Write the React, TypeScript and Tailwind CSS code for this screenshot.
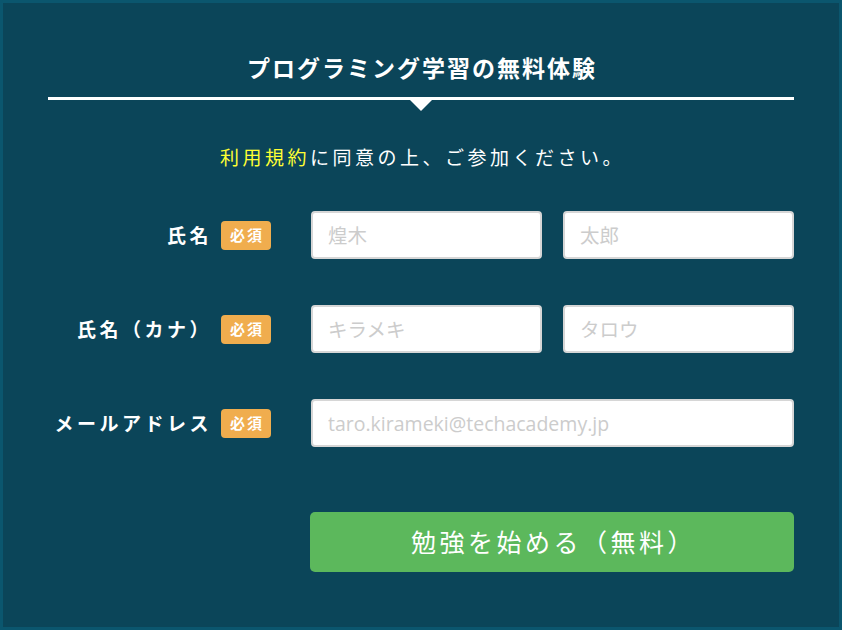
import React from 'react';

const font = { fontFamily: '"Noto Sans CJK JP", "Noto Sans", sans-serif' };
const inputFont = { fontFamily: '"Open Sans", "Noto Sans CJK JP", sans-serif' };

function Badge() {
  return (
    <span className="inline-flex h-[29px] w-[50px] items-center justify-center rounded-[4px] bg-[#f0ad4e] pl-[2px] text-[15px] font-bold tracking-[2px] text-white">
      必須
    </span>
  );
}

function Label({ text }: { text: string }) {
  return (
    <div className="flex w-[223px] items-center justify-end gap-[9px]">
      <span className="text-[19px] font-bold tracking-[3.5px] text-white">{text}</span>
      <Badge />
    </div>
  );
}

function Field({ placeholder, wide }: { placeholder: string; wide?: boolean }) {
  return (
    <input
      placeholder={placeholder}
      className={
        (wide ? 'w-[483px]' : 'w-[231px]') +
        ' h-[48px] rounded-[4px] border-2 border-[#d6d6d6] bg-white px-[15px] text-[19.5px] text-gray-700 outline-none placeholder:text-[#cccccc]'
      }
      style={inputFont}
    />
  );
}

export default function App() {
  return (
    <div
      className="box-border flex h-[630px] w-[842px] flex-col border-[3px] border-[#0b566e] bg-[#0b4559] px-[45px]"
      style={font}
    >
      <h1 className="pt-[47px] pl-[2px] text-center text-[23px] font-bold leading-[34px] tracking-[2px] text-white">
        プログラミング学習の無料体験
      </h1>
      <div className="relative mt-[13px] h-[3px] bg-white">
        <div className="absolute left-1/2 top-[3px] h-0 w-0 -translate-x-1/2 border-x-[11px] border-t-[11px] border-x-transparent border-t-white" />
      </div>

      <p className="mt-[44px] pl-[3px] text-center text-[19px] leading-[26px] tracking-[3.5px] text-white">
        <span className="text-[#ffff33]">利用規約</span>に同意の上、ご参加ください。
      </p>

      <div className="mt-[41px] flex flex-col gap-[46px]">
        <div className="flex items-center gap-[40px]">
          <Label text="氏名" />
          <div className="flex gap-[21px]">
            <Field placeholder="煌木" />
            <Field placeholder="太郎" />
          </div>
        </div>
        <div className="flex items-center gap-[40px]">
          <Label text="氏名（カナ）" />
          <div className="flex gap-[21px]">
            <Field placeholder="キラメキ" />
            <Field placeholder="タロウ" />
          </div>
        </div>
        <div className="flex items-center gap-[40px]">
          <Label text="メールアドレス" />
          <Field placeholder="taro.kirameki@techacademy.jp" wide />
        </div>
      </div>

      <div className="mt-[65px] flex pl-[262px]">
        <button className="h-[60px] w-[484px] rounded-[5px] bg-[#5cb85c] pl-[3px] text-[25px] tracking-[3.5px] text-white">
          勉強を始める（無料）
        </button>
      </div>
    </div>
  );
}
